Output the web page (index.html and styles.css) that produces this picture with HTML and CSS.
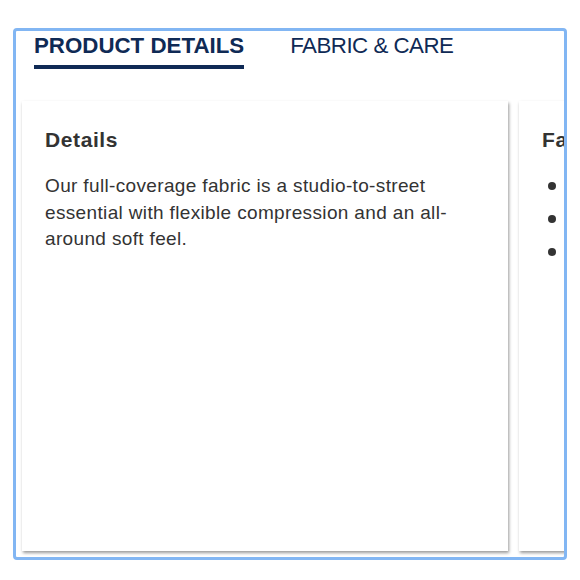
FILE: index.html
```html
<!DOCTYPE html>
<html>
<head>
<meta charset="utf-8">
<link rel="stylesheet" href="styles.css">
</head>
<body>
<div class="page">
  <div class="frame">
    <div class="tabs">
      <div class="tab active">PRODUCT DETAILS</div>
      <div class="tab">FABRIC &amp; CARE</div>
    </div>
    <div class="cards">
      <div class="card">
        <h2 class="card-title">Details</h2>
        <p class="card-text">Our full-coverage fabric is a studio-to-street essential with flexible compression and an all-around soft feel.</p>
      </div>
      <div class="card">
        <h2 class="card-title">Fabric Features</h2>
        <ul class="features">
          <li>Sweat-wicking</li>
          <li>Four-way stretch</li>
          <li>Breathable</li>
        </ul>
      </div>
    </div>
  </div>
</div>
</body>
</html>
```
FILE: styles.css
```css
html, body {
  margin: 0;
  padding: 0;
  background: #ffffff;
}
body {
  font-family: "Liberation Sans", Arial, sans-serif;
  color: #333333;
}
.page {
  padding: 28px 13px 20px 13px;
}
.frame {
  width: 548px;
  height: 526px;
  border: 3px solid #82b6f3;
  border-radius: 4px;
  background: #ffffff;
  overflow: hidden;
  display: flex;
  flex-direction: column;
}
.tabs {
  display: flex;
  gap: 46px;
  padding: 1px 0 0 18px;
}
.tab {
  font-size: 22.3px;
  line-height: 28px;
  color: #0f2a55;
  padding-bottom: 5px;
  border-bottom: 4px solid transparent;
  white-space: nowrap;
  letter-spacing: -0.5px;
}
.tab.active {
  font-weight: bold;
  letter-spacing: 0;
  border-bottom-color: #0f2a55;
}
.cards {
  flex: 1;
  display: flex;
  gap: 11px;
  padding: 32px 6px 6px 6px;
  overflow: hidden;
}
.card {
  flex: 0 0 486px;
  box-sizing: border-box;
  padding: 25px 23px;
  background: #ffffff;
  box-shadow: 1px 2px 3px rgba(0, 0, 0, 0.4);
}
.card-title {
  margin: 0 0 19px 0;
  font-size: 21px;
  line-height: 28px;
  font-weight: bold;
  letter-spacing: 0.6px;
  color: #333333;
}
.card-text {
  margin: 0;
  font-size: 19px;
  line-height: 26.5px;
  letter-spacing: 0.35px;
  color: #333333;
}
.features {
  list-style: none;
  margin: 0;
  padding: 0 0 0 6px;
}
.features li {
  display: flex;
  align-items: center;
  gap: 12px;
  font-size: 19px;
  line-height: 26.5px;
  margin-bottom: 6.5px;
  white-space: nowrap;
}
.features li::before {
  content: "";
  flex: 0 0 8px;
  width: 8px;
  height: 8px;
  border-radius: 50%;
  background: #333333;
}
```
